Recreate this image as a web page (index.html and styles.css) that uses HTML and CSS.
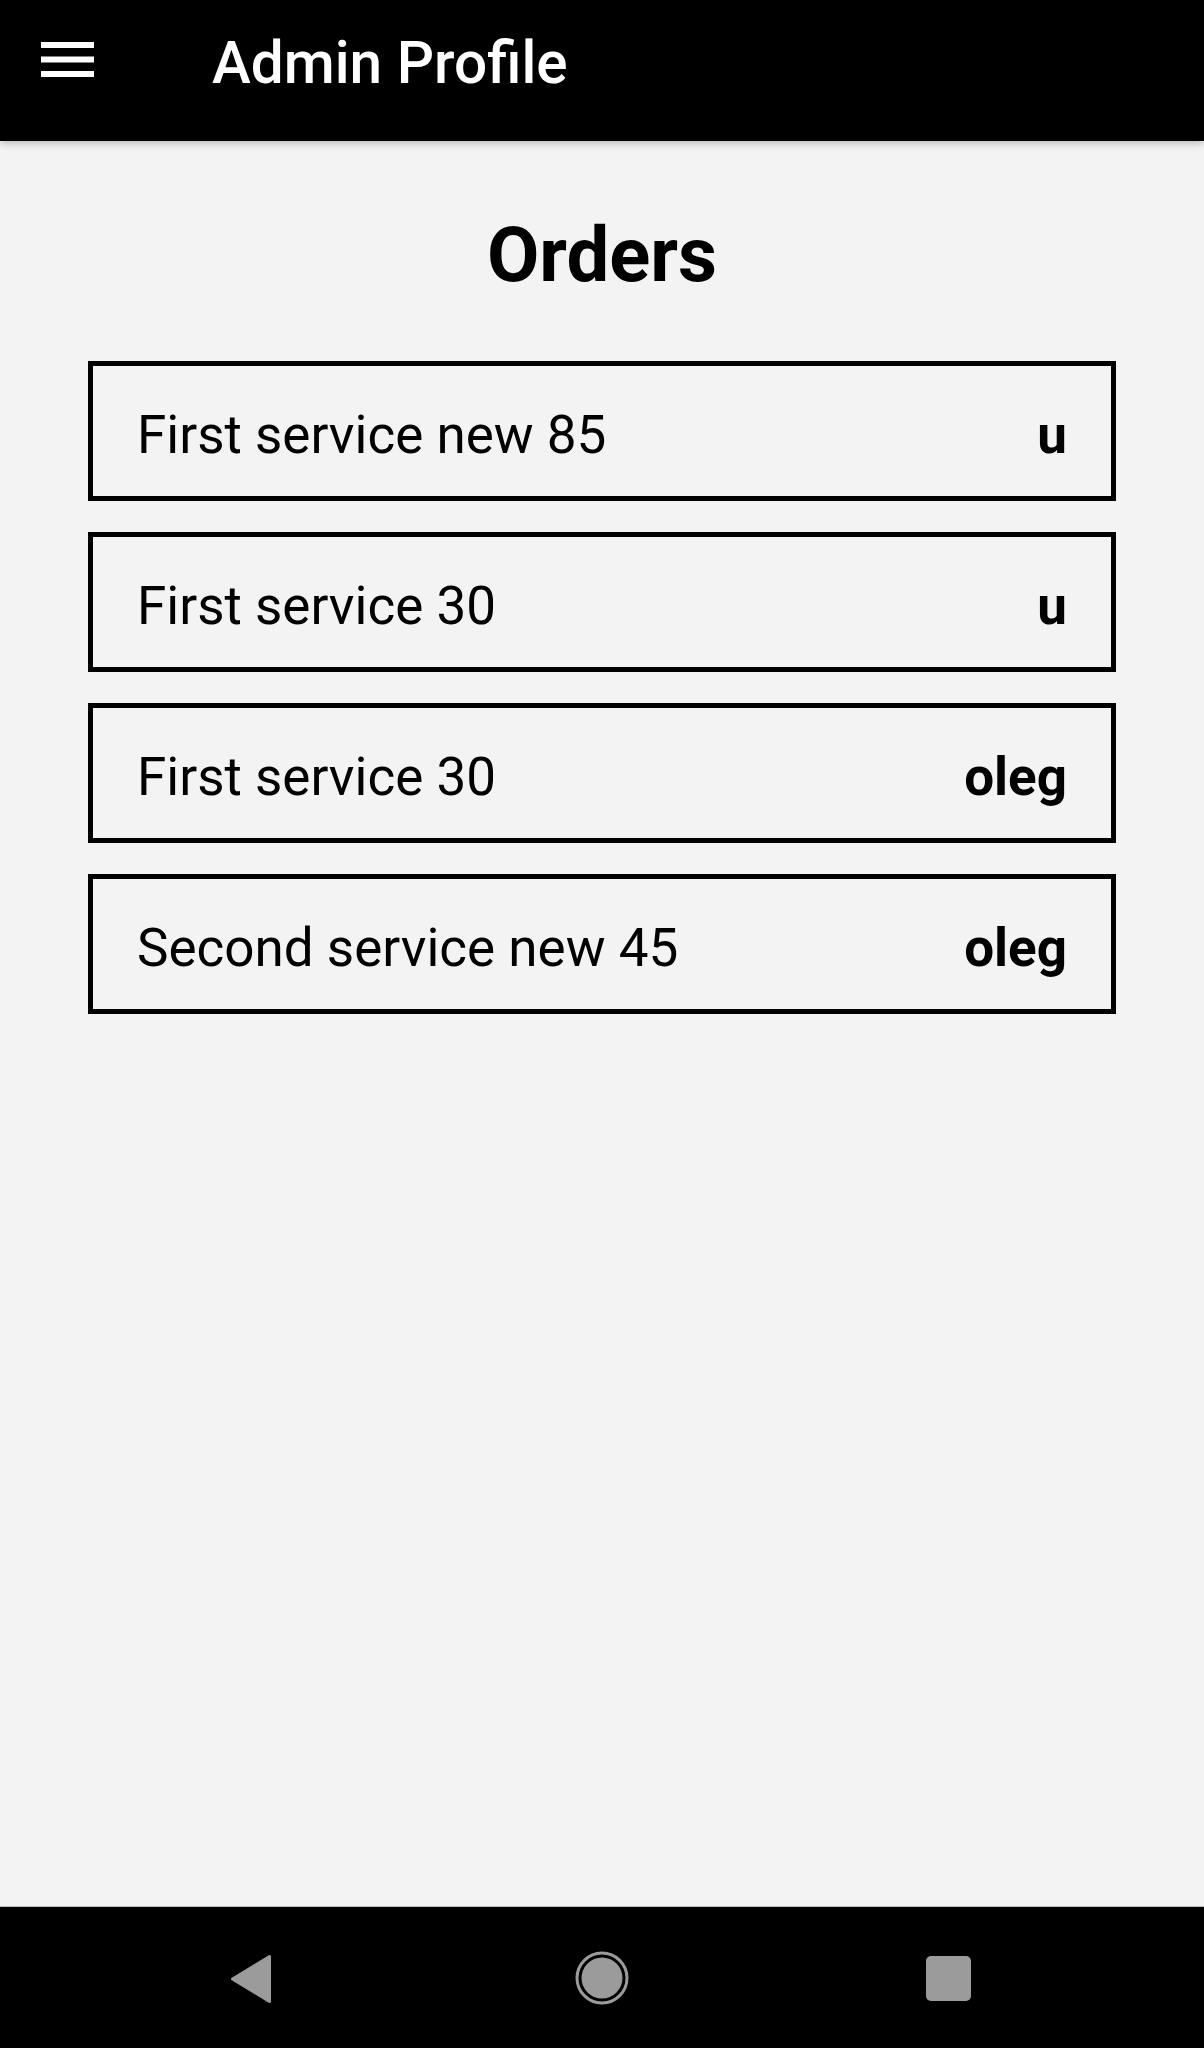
FILE: index.html
```html
<!DOCTYPE html>
<html>
<head>
<meta charset="utf-8">
<link rel="stylesheet" href="styles.css">
</head>
<body>
<div class="app">
  <header class="topbar">
    <svg class="menu" width="53" height="36" viewBox="0 0 53 36"><rect x="0" y="1" width="53" height="6" fill="#fff"/><rect x="0" y="15.5" width="53" height="6" fill="#fff"/><rect x="0" y="30" width="53" height="6" fill="#fff"/></svg>
    <div class="title">Admin Profile</div>
  </header>
  <main class="content">
    <h1 class="heading">Orders</h1>
    <div class="list">
      <div class="item"><span class="name">First service new 85</span><span class="user">u</span></div>
      <div class="item"><span class="name">First service 30</span><span class="user">u</span></div>
      <div class="item"><span class="name">First service 30</span><span class="user">oleg</span></div>
      <div class="item"><span class="name">Second service new 45</span><span class="user">oleg</span></div>
    </div>
  </main>
  <nav class="navbar">
    <svg class="nav-back" width="42" height="52" viewBox="0 0 42 52"><polygon points="39.5,4.5 39.5,49.5 2.5,27" fill="#9b9b9b" stroke="#9b9b9b" stroke-width="3" stroke-linejoin="round"/></svg>
    <svg class="nav-home" width="56" height="56" viewBox="0 0 56 56"><circle cx="28" cy="28" r="25" fill="none" stroke="#9b9b9b" stroke-width="3"/><circle cx="28" cy="28" r="20.5" fill="#9b9b9b"/></svg>
    <svg class="nav-recent" width="45" height="45" viewBox="0 0 45 45"><rect x="0" y="0" width="45" height="45" rx="5" fill="#9b9b9b"/></svg>
  </nav>
</div>
</body>
</html>
```

FILE: styles.css
```css
html, body {
  margin: 0;
  padding: 0;
}
body {
  background: #f3f3f3;
  font-family: Roboto, "Noto Sans", sans-serif;
}
.app {
  height: 2048px;
  display: flex;
  flex-direction: column;
}
.topbar {
  height: 141px;
  background: #000;
  display: flex;
  align-items: center;
  box-shadow: 0 2px 8px rgba(0,0,0,0.25);
  position: relative;
  z-index: 1;
  flex: none;
}
.menu {
  margin-left: 41px;
  margin-top: -23px;
}
.title {
  margin-left: 118px;
  margin-top: -15px;
  color: #fff;
  font-size: 58.5px;
  font-weight: 500;
  line-height: 1;
}
.content {
  flex: 1;
  display: flex;
  flex-direction: column;
  align-items: center;
}
.heading {
  margin: 76px 0 68px;
  font-size: 76px;
  font-weight: 700;
  line-height: 1;
  color: #000;
}
.list {
  width: 1028px;
  display: flex;
  flex-direction: column;
  gap: 31px;
}
.item {
  box-sizing: border-box;
  height: 140px;
  border: 5px solid #000;
  display: flex;
  align-items: center;
  justify-content: space-between;
  padding: 8px 44px 0 44px;
  font-size: 53px;
  color: #000;
}
.user {
  font-weight: 700;
}
.navbar {
  flex: none;
  height: 142px;
  background: #000;
  border-top: 1px solid #bdbdbd;
  box-sizing: border-box;
  display: flex;
  align-items: center;
}
.nav-back { margin-left: 230px; }
.nav-home { margin-left: 302px; }
.nav-recent { margin-left: 296px; margin-top: 2px; }
```
